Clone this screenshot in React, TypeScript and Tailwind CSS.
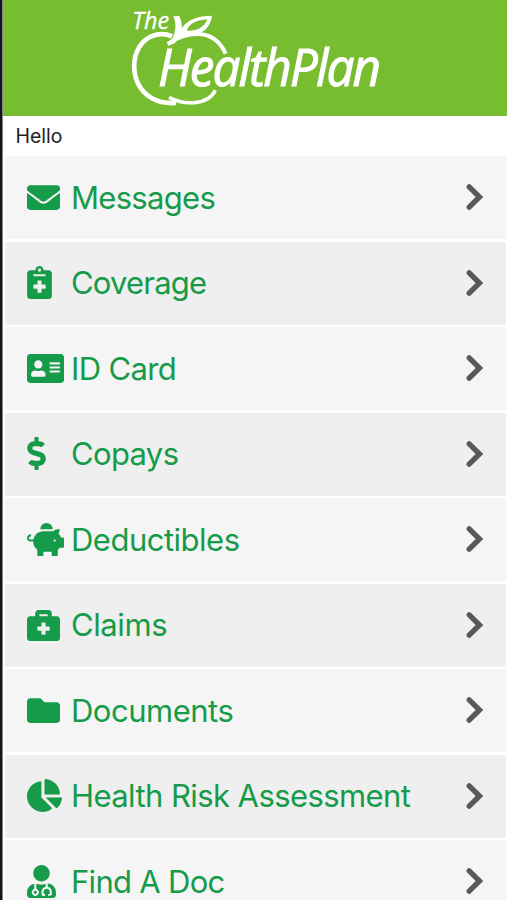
import type { IconType } from "react-icons";
import {
  FaAddressCard,
  FaBriefcaseMedical,
  FaChartPie,
  FaDollarSign,
  FaEnvelope,
  FaFolder,
  FaNotesMedical,
  FaPiggyBank,
  FaUserMd,
} from "react-icons/fa";

type MenuItem = {
  label: string;
  icon: IconType;
  size: string;
  tracking: string;
};

const items: MenuItem[] = [
  { label: "Messages", icon: FaEnvelope, size: "w-[33px]", tracking: "tracking-[-0.7px]" },
  { label: "Coverage", icon: FaNotesMedical, size: "w-[25px]", tracking: "tracking-[-0.8px]" },
  { label: "ID Card", icon: FaAddressCard, size: "w-[37px]", tracking: "tracking-[-0.65px]" },
  { label: "Copays", icon: FaDollarSign, size: "w-[19px]", tracking: "tracking-[-0.65px]" },
  { label: "Deductibles", icon: FaPiggyBank, size: "w-[37px]", tracking: "tracking-[-0.5px]" },
  { label: "Claims", icon: FaBriefcaseMedical, size: "w-[33px]", tracking: "tracking-[-0.4px]" },
  { label: "Documents", icon: FaFolder, size: "w-[33px]", tracking: "tracking-[-0.5px]" },
  { label: "Health Risk Assessment", icon: FaChartPie, size: "w-[35px]", tracking: "tracking-[-0.58px]" },
  { label: "Find A Doc", icon: FaUserMd, size: "w-[29px]", tracking: "tracking-[-0.7px]" },
];

function Logo() {
  return (
    <svg
      viewBox="0 0 810 348"
      className="ml-[117px] h-[116px] w-[270px] overflow-visible font-['Open_Sans',sans-serif] italic"
      fill="white"
    >
      {/* Apple outline */}
      <g fill="none" stroke="white">
        <path strokeWidth="14" d="M156 109C122 94 86 106 66 130C40 162 36 206 52 246C70 288 112 313 168 309" />
        <path strokeWidth="12" d="M143 132C170 112 198 101 238 102C280 105 304 132 317 161" />
        <path strokeWidth="11" d="M147 292C190 315 264 318 286 271" />
      </g>
      {/* Stem and leaf */}
      <path d="M160 49L178 48C186 66 188 86 184 102L164 130L142 138L156 118C168 94 170 70 160 49Z" />
      <path
        fillRule="evenodd"
        d="M176 108C184 76 208 48 276 47C272 82 246 108 202 104L176 114ZM200 92C228 94 252 84 262 58C230 60 208 70 200 92Z"
      />
      <text x="37" y="86" fontSize="70" textLength="110" lengthAdjust="spacingAndGlyphs" stroke="white">
        The
      </text>
      <text
        x="114"
        y="257"
        fontSize="151"
        textLength="663"
        letterSpacing="-6"
        lengthAdjust="spacingAndGlyphs"
        stroke="white"
        strokeWidth="3"
      >
        HealthPlan
      </text>
    </svg>
  );
}

function Chevron() {
  return (
    <svg
      viewBox="0 0 18 28"
      className="h-7 w-[18px]"
      fill="none"
      stroke="#58595b"
      strokeWidth="5.3"
      strokeLinecap="round"
    >
      <path d="M3.2 3.8L13.5 14L3.2 24.2" />
    </svg>
  );
}

export default function App() {
  return (
    <div className="flex h-[900px] w-[507px] overflow-hidden bg-white font-[Inter,sans-serif]">
      <div className="w-[3px] shrink-0 border-r border-[#858585] bg-[#151515]" />
      <div className="flex min-w-0 flex-1 flex-col">
        <header className="h-[116px] shrink-0 bg-[#78bc2f]">
          <Logo />
        </header>
        <div className="flex h-10 shrink-0 items-center pl-[12.5px] pt-px text-[19.5px] text-[#222]">
          Hello
        </div>
        <nav className="ml-0.5 mr-px flex flex-col gap-[2.5px]">
          {items.map(({ label, icon: Icon, size, tracking }) => (
            <a
              key={label}
              className="flex h-[83px] shrink-0 items-center bg-[#f5f5f5] pb-px pl-[22px] pr-[22px] text-[#159b49] even:bg-[#efefef]"
            >
              <span className="w-[44px] shrink-0">
                <Icon className={`h-[33px] ${size}`} />
              </span>
              <span className={`flex-1 whitespace-nowrap text-[31px] leading-none ${tracking}`}>
                {label}
              </span>
              <Chevron />
            </a>
          ))}
        </nav>
      </div>
    </div>
  );
}
